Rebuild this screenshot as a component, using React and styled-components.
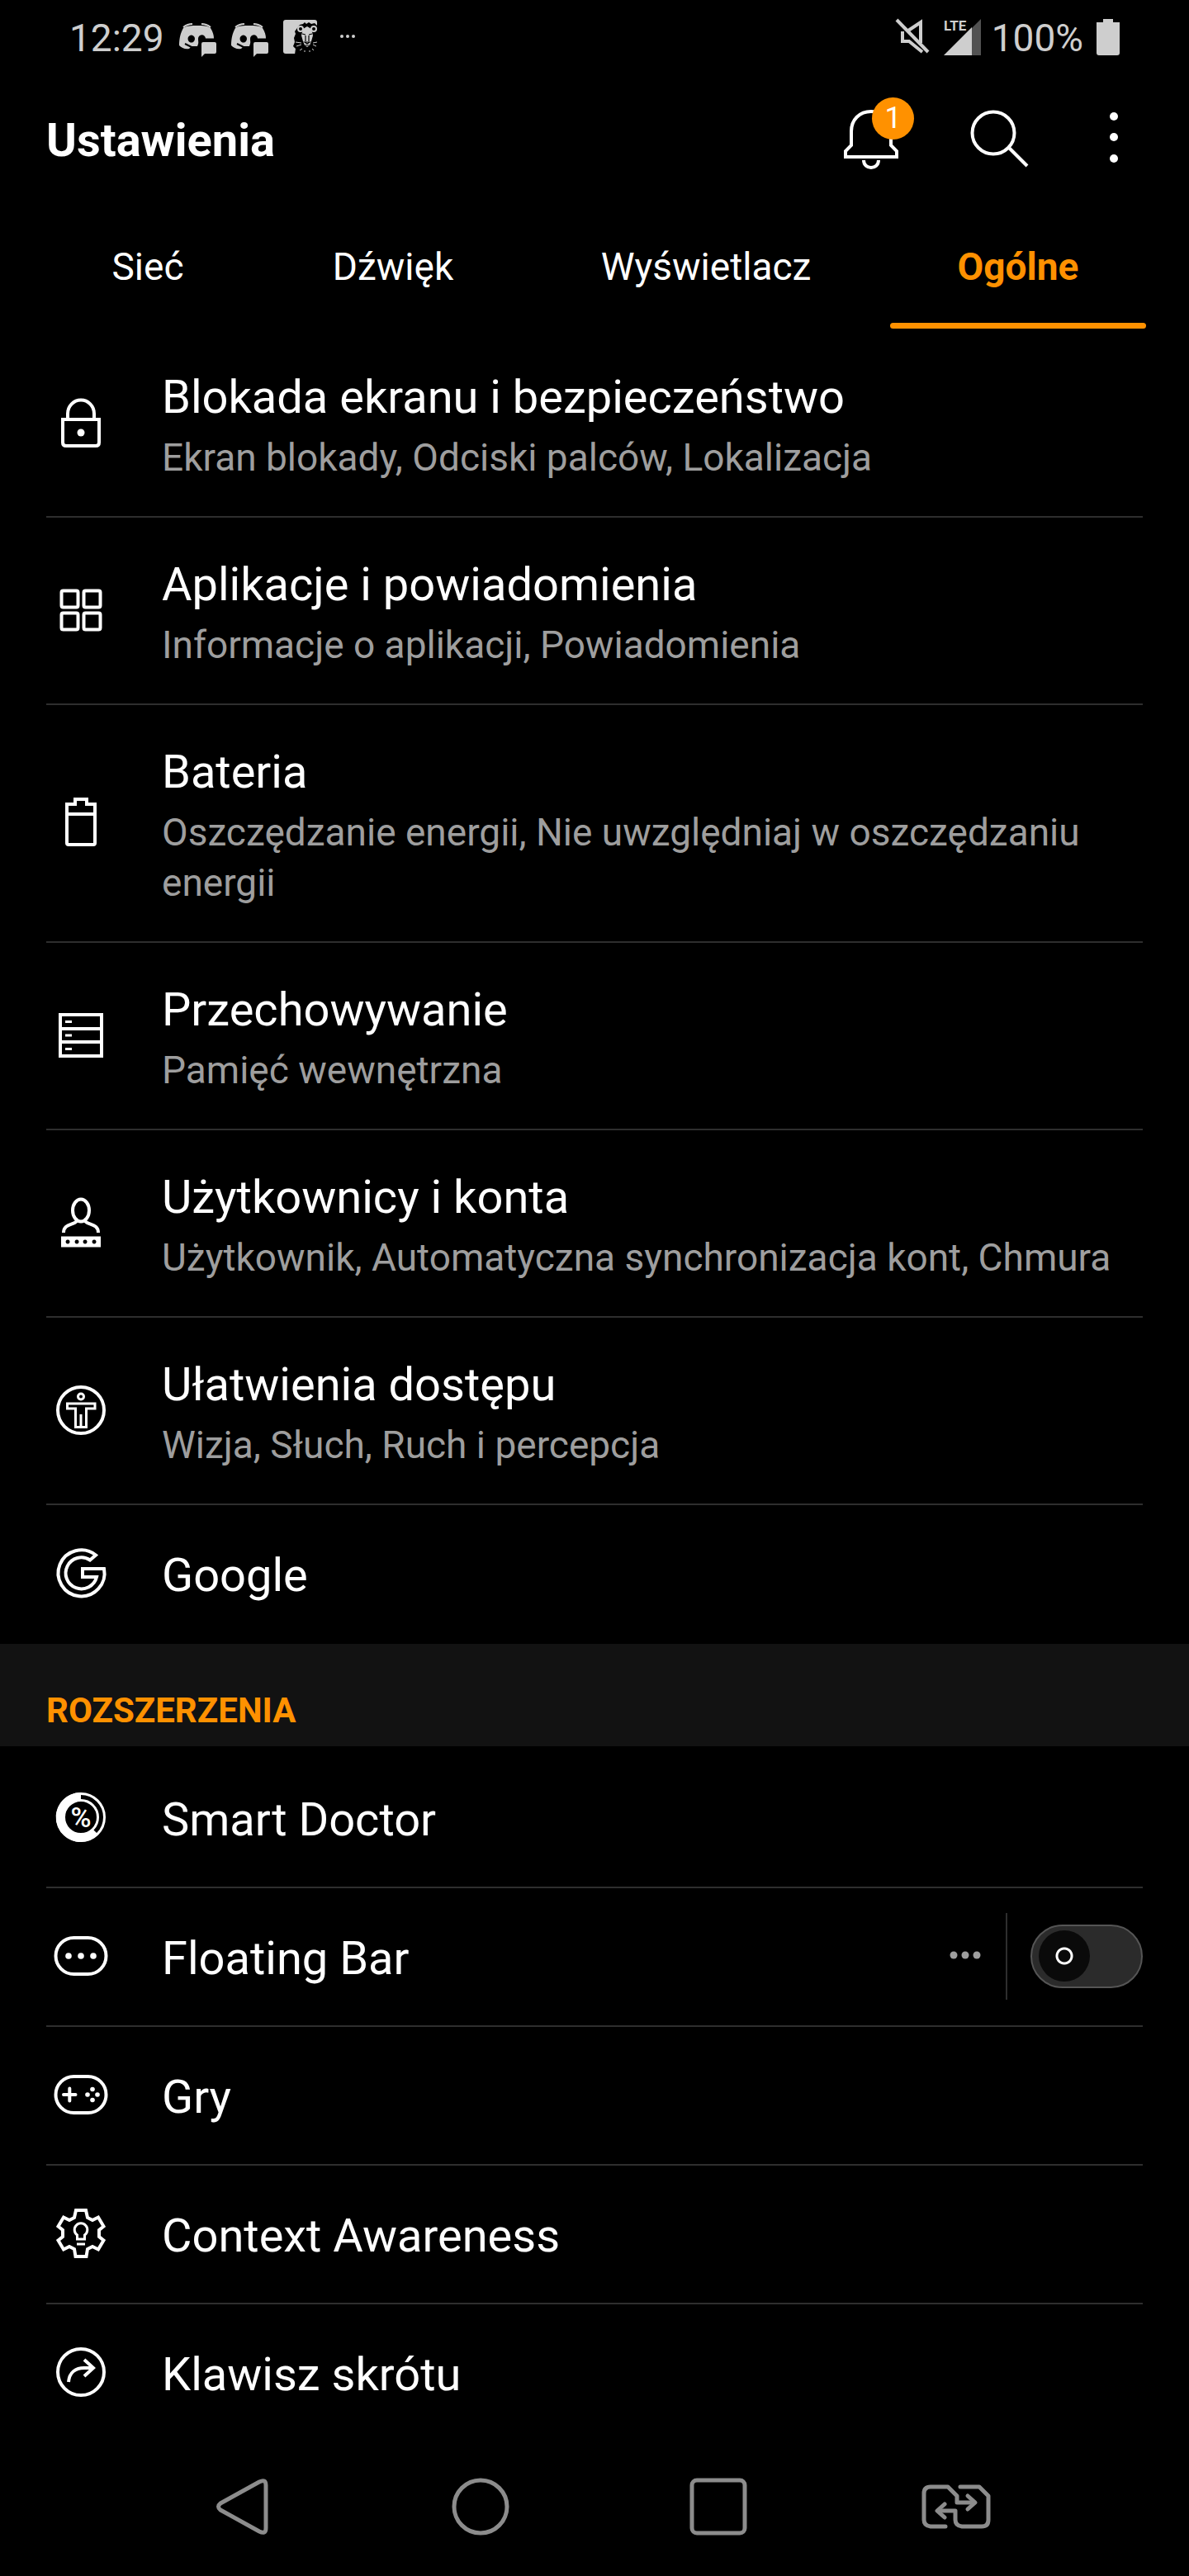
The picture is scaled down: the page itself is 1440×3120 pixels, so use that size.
import React from "react";
import styled, {createGlobalStyle} from "styled-components"

const tabs = [
    {id: 'network', name: 'Sieć'},
    {id: 'sound', name: 'Dźwięk'},
    {id: 'display', name: 'Wyświetlacz'},
    {id: 'general', name: 'Ogólne'},
]

const general = [
    {name: 'Blokada ekranu i bezpieczeństwo', info: 'Ekran blokady, Odciski palców, Lokalizacja', Icon: LockIcon},
    {name: 'Aplikacje i powiadomienia', info: 'Informacje o aplikacji, Powiadomienia', Icon: AppsIcon},
    {name: 'Bateria', info: 'Oszczędzanie energii, Nie uwzględniaj w oszczędzaniu energii', Icon: BatteryIcon},
    {name: 'Przechowywanie', info: 'Pamięć wewnętrzna', Icon: StorageIcon},
    {name: 'Użytkownicy i konta', info: 'Użytkownik, Automatyczna synchronizacja kont, Chmura', Icon: UserIcon},
    {name: 'Ułatwienia dostępu', info: 'Wizja, Słuch, Ruch i percepcja', Icon: AccessibilityIcon},
    {name: 'Google', Icon: GoogleIcon},
]

const extensions = [
    {name: 'Smart Doctor', Icon: DoctorIcon},
    {name: 'Floating Bar', Icon: FloatingBarIcon, toggle: true},
    {name: 'Gry', Icon: GamesIcon},
    {name: 'Context Awareness', Icon: ContextIcon},
    {name: 'Klawisz skrótu', Icon: ShortcutIcon},
]

export default function App() {
    const [active, setActive] = React.useState('general')

    return (
        <>
            <GlobalStyle />
            <Screen>
                <StatusBar />
                <Toolbar>
                    <Heading>Ustawienia</Heading>
                    <Actions>
                        <ActionButton aria-label="Powiadomienia">
                            <BellIcon />
                            <Badge>1</Badge>
                        </ActionButton>
                        <ActionButton aria-label="Szukaj"><SearchIcon /></ActionButton>
                        <ActionButton aria-label="Więcej"><MoreIcon /></ActionButton>
                    </Actions>
                </Toolbar>
                <Tabs>
                    {tabs.map(tab => (
                        <Tab key={tab.id} $active={tab.id === active} onClick={() => setActive(tab.id)}>
                            {tab.name}
                        </Tab>
                    ))}
                </Tabs>
                <main>
                    <List>
                        {general.map(item => <Setting key={item.name} {...item} />)}
                    </List>
                    <SectionTitle>ROZSZERZENIA</SectionTitle>
                    <List $spaced>
                        {extensions.map(item => <Setting key={item.name} {...item} />)}
                    </List>
                </main>
                <NavBar />
            </Screen>
        </>
    )
}

function Setting({name, info, Icon, toggle}) {
    const [checked, setChecked] = React.useState(false)

    if (toggle) {
        return (
            <Item>
                <Row as="div">
                    <Icon />
                    <Texts $single><Name as="label" htmlFor="toggle">{name}</Name></Texts>
                    <Controls>
                        <OptionsButton aria-label="Opcje">
                            <svg width="42" height="42" fill="#9e9e9e">
                                <circle cx="7" cy="20" r="4.5" />
                                <circle cx="21" cy="20" r="4.5" />
                                <circle cx="35" cy="20" r="4.5" />
                            </svg>
                        </OptionsButton>
                        <Separator />
                        <Switch
                            id="toggle"
                            type="checkbox"
                            checked={checked}
                            onChange={({target}) => setChecked(target.checked)}
                        />
                    </Controls>
                </Row>
            </Item>
        )
    }

    return (
        <Item>
            <Row href="#">
                <Icon />
                <Texts $single={!info}>
                    <Name>{name}</Name>
                    {info ? <Info>{info}</Info> : null}
                </Texts>
            </Row>
        </Item>
    )
}

function StatusBar() {
    return (
        <Status>
            <StatusGroup>
                <span>12:29</span>
                <DiscordIcon />
                <DiscordIcon />
                <LionIcon />
                <svg width="46" height="46" fill="currentColor">
                    <circle cx="11" cy="21" r="2" />
                    <circle cx="18" cy="21" r="2" />
                    <circle cx="25" cy="21" r="2" />
                </svg>
            </StatusGroup>
            <StatusGroup $right>
                <svg width="42" height="46" fill="none" stroke="currentColor" strokeWidth="4">
                    <path d="M15 14L30 4V29" />
                    <path d="M8 15V27H16L32 40" />
                    <path d="M1 1L39 40" />
                </svg>
                <svg width="42" height="46" fill="currentColor">
                    <path d="M45 0V44H34V11Z" opacity="0.4" />
                    <path d="M0 44L34 10V44Z" />
                    <text x="0" y="14" fontSize="17" fontWeight="700">LTE</text>
                </svg>
                <span>100%</span>
                <svg width="28" height="46" fill="currentColor">
                    <path d="M8 0H20V4H28V41a3 3 0 0 1-3 3H3a3 3 0 0 1-3-3V4H8Z" />
                </svg>
            </StatusGroup>
        </Status>
    )
}

function NavBar() {
    return (
        <Nav>
            <NavButton aria-label="Wstecz">
                <NavSvg>
                    <path d="M8 31L55 5Q63 1 63 9V61Q63 69 55 65L8 39Q3 35 8 31Z" />
                </NavSvg>
            </NavButton>
            <NavButton aria-label="Ekran główny">
                <NavSvg><circle cx="35" cy="35" r="32" /></NavSvg>
            </NavButton>
            <NavButton aria-label="Ostatnie">
                <NavSvg><rect x="3" y="3" width="64" height="64" rx="6" /></NavSvg>
            </NavButton>
            <NavButton aria-label="Podziel ekran">
                <NavSvg $wide>
                    <path d="M29 59H11Q3 58 3 51V19Q3 11 11 11H32L43 22V30H63" />
                    <path d="M56 22L65 30L56 38" />
                    <path d="M47 11H70L81 22V51Q81 59 73 59H49Q41 58 41 51V40H21" />
                    <path d="M28 32L19 40L28 48" />
                </NavSvg>
            </NavButton>
        </Nav>
    )
}

function DiscordIcon() {
    return (
        <svg width="45" height="46" fill="currentColor">
            <path
                fillRule="evenodd"
                d="M5 11C9 8 15 8 22 8S34 8 38 11C41 16 42 20 42 23.5H32A4.5 4.5 0 0 0 23 24C23 28 24 28 22 33H15L12 36C7 37 3 35 0 32C0 23 2 16 5 11ZM14.7 19.5a4.2 4.5 0 1 0 .1 0Z"
            />
            <path d="M5 10Q10 6 16 6M27 6Q33 6 38 10" fill="none" stroke="currentColor" strokeWidth="2" />
            <path d="M7 30L15 34" stroke="#000" strokeWidth="2" />
            <path d="M29 28H43a2 2 0 0 1 2 2V40a2 2 0 0 1-2 2H31L27 46V30a2 2 0 0 1 2-2Z" />
        </svg>
    )
}

function LionIcon() {
    return (
        <svg width="42" height="46" fill="none">
            <rect y="1" width="41" height="41" rx="3" fill="currentColor" />
            <path d="M17 11L20 7L24 6L26 4L28 6L31 4L34 6L38 5L42 9V43H14L15 36L12 33L14 28L13 23L15 18L14 15Z" fill="#000" />
            <circle cx="21" cy="12" r="3" stroke="currentColor" strokeWidth="2" />
            <circle cx="37" cy="12" r="3" stroke="currentColor" strokeWidth="2" />
            <path d="M24 12L29 9L34 12L36 20L34 27L32 32L29 34L26 32L24 27L22 20Z" fill="currentColor" />
            <path d="M23 18L27 19M35 18L31 19M27 20V27M31 20V27M26 28H32L29 30ZM26 32H32" stroke="#000" strokeWidth="1.2" />
            <path d="M15 28L22 29M16 33L22 31M36 31L40 33M36 29L41 28M20 38L23 36M26 40V38M32 40V38M37 38L35 36" stroke="currentColor" strokeWidth="1" />
        </svg>
    )
}

function BellIcon() {
    return (
        <svg width="102" height="84" fill="none" stroke="currentColor" strokeWidth="4">
            <path d="M18 48V31C18 17 28 7 42 7S66 17 66 31V48L73 55V62H11V55Z" />
            <path d="M33 66C33 78 51 78 51 66" />
        </svg>
    )
}

function SearchIcon() {
    return (
        <svg width="84" height="84" fill="none" stroke="currentColor" strokeWidth="4">
            <circle cx="34" cy="33" r="25.5" />
            <path d="M52 50L75 73" />
        </svg>
    )
}

function MoreIcon() {
    return (
        <svg width="84" height="84" fill="currentColor">
            <circle cx="42" cy="13" r="5" />
            <circle cx="42" cy="38" r="5" />
            <circle cx="42" cy="64" r="5" />
        </svg>
    )
}

function LockIcon() {
    return (
        <IconSvg>
            <path d="M20 38H64V66Q64 70 60 70H24Q20 70 20 66Z" />
            <path d="M26 38V31a16 16.5 0 0 1 32 0V38" />
            <circle cx="42" cy="54" r="4.5" fill="currentColor" stroke="none" />
        </IconSvg>
    )
}

function AppsIcon() {
    return (
        <IconSvg>
            <rect x="18.5" y="18.5" width="20" height="20" rx="2" />
            <rect x="45.5" y="18.5" width="20" height="20" rx="2" />
            <rect x="18.5" y="45.5" width="20" height="20" rx="2" />
            <rect x="45.5" y="45.5" width="20" height="20" rx="2" />
        </IconSvg>
    )
}

function BatteryIcon() {
    return (
        <IconSvg>
            <path d="M25 20H35V14H49V20H59V67Q59 69 57 69H27Q25 69 25 67Z" />
            <path d="M25 32H59" />
        </IconSvg>
    )
}

function StorageIcon() {
    return (
        <IconSvg>
            <path d="M17 17H67V67H17ZM17 34H67M17 50H67" />
            <path d="M23 25.5H31M23 42H31M23 58.5H31" strokeWidth="3" />
        </IconSvg>
    )
}

function UserIcon() {
    return (
        <IconSvg>
            <ellipse cx="42" cy="27" rx="10" ry="13.5" />
            <path d="M21 54C21 43 33 45 37 40M63 54C63 43 51 45 47 40" />
            <path
                d="M18 58.5H66V71.5H18ZM26 62.5a2.5 2.5 0 1 0 .1 0ZM37 62.5a2.5 2.5 0 1 0 .1 0ZM47 62.5a2.5 2.5 0 1 0 .1 0ZM58 62.5a2.5 2.5 0 1 0 .1 0Z"
                fill="currentColor"
                fillRule="evenodd"
                stroke="none"
            />
        </IconSvg>
    )
}

function AccessibilityIcon() {
    return (
        <IconSvg>
            <circle cx="42" cy="42" r="28" />
            <g className="thin">
                <circle cx="42" cy="25.5" r="3.5" />
                <path d="M25.5 34H59V40H48.5V62.5H35.5V40H25.5ZM42 47V62" />
            </g>
        </IconSvg>
    )
}

function GoogleIcon() {
    return (
        <IconSvg>
            <path d="M60 20.5A28 28 0 1 0 70 37H44V47H61A19 19 0 1 1 53 26.5Z" />
        </IconSvg>
    )
}

function DoctorIcon() {
    return (
        <IconSvg>
            <circle cx="42" cy="42" r="20.5" strokeWidth="3" />
            <circle cx="42" cy="42" r="28.5" strokeWidth="3" />
            <path d="M42 17A25 25 0 1 0 59.5 59.5" strokeWidth="10" />
            <text x="42" y="54" textAnchor="middle" fontSize="34" fontWeight="500" fill="currentColor" stroke="none">%</text>
        </IconSvg>
    )
}

function FloatingBarIcon() {
    return (
        <IconSvg>
            <rect x="11.5" y="20" width="61" height="44" rx="22" />
            <g fill="currentColor" stroke="none">
                <circle cx="27" cy="42" r="3.8" />
                <circle cx="42" cy="42" r="3.8" />
                <circle cx="57" cy="42" r="3.8" />
            </g>
        </IconSvg>
    )
}

function GamesIcon() {
    return (
        <IconSvg>
            <rect x="11.5" y="20" width="61" height="44" rx="22" />
            <path d="M21 42H35.5M28.3 34.5V49.5" strokeLinecap="round" />
            <g fill="currentColor" stroke="none">
                <circle cx="56" cy="35.5" r="2.8" />
                <circle cx="56" cy="48.5" r="2.8" />
                <circle cx="50" cy="42" r="2.8" />
                <circle cx="62" cy="42" r="2.8" />
            </g>
        </IconSvg>
    )
}

function ContextIcon() {
    return (
        <IconSvg>
            <path d="M36 14H48L50 23L56 26L63 22.5L69.5 33.5L64 38V46L69.5 50.5L63 61.5L56 58L50 61L48.5 70H35.5L34 61L28 58L21 61.5L14.5 50.5L20 46V38L14.5 33.5L21 22.5L28 26L34 23Z" />
            <g className="thin">
                <path d="M37.5 49V44A7.8 7.8 0 1 1 46.5 44V49Z" />
                <path d="M37 55H47" />
            </g>
        </IconSvg>
    )
}

function ShortcutIcon() {
    return (
        <IconSvg>
            <circle cx="42" cy="42" r="28" />
            <path d="M27 54C28 42 36 37 46 37H57M46 27L57 37L46 47" />
        </IconSvg>
    )
}

const GlobalStyle = createGlobalStyle`
  * {
    box-sizing: border-box;
  }

  body {
    margin: 0;
    background: #000;
    color: #fff;
    font-family: Roboto, sans-serif;
  }

  button {
    padding: 0;
    border: 0;
    background: none;
    color: inherit;
    font: inherit;
    cursor: pointer;
  }

  svg {
    display: block;
    flex: none;
    overflow: visible;
  }
`;

const Screen = styled.div`
  display: flex;
  flex-direction: column;
`;

const Status = styled.div`
  display: flex;
  justify-content: space-between;
  align-items: center;
  height: 92px;
  padding: 0 84px;
  color: #cecece;
  font-size: 46px;
  line-height: 54px;
`;

const StatusGroup = styled.div`
  display: flex;
  align-items: center;
  gap: ${({$right}) => $right ? 16 : 18}px;
`;

const Toolbar = styled.header`
  display: flex;
  justify-content: space-between;
  align-items: center;
  height: 156px;
  padding: 0 49px 0 56px;
`;

const Heading = styled.h1`
  margin: 0;
  font-size: 56px;
  line-height: 66px;
  font-weight: 700;
`;

const Actions = styled.div`
  display: flex;
  gap: 54px;
`;

const ActionButton = styled.button`
  position: relative;
`;

const Badge = styled.span`
  position: absolute;
  top: -10px;
  left: 43px;
  width: 51px;
  height: 51px;
  border-radius: 50%;
  background: #ff9100;
  font-size: 36px;
  line-height: 50px;
  text-align: center;
`;

const Tabs = styled.nav`
  display: grid;
  grid-template-columns: 282fr 312fr 446fr 310fr;
  padding: 0 52px 2px 38px;
`;

const Tab = styled.button`
  position: relative;
  height: 150px;
  font-size: 46px;
  line-height: 54px;

  && {
    color: ${({$active}) => $active ? '#ff9100' : '#fff'};
    font-weight: ${({$active}) => $active ? 700 : 400};
  }

  &::after {
    content: '';
    position: absolute;
    left: 0;
    right: 0;
    bottom: 0;
    height: 7px;
    border-radius: 4px;
    background: ${({$active}) => $active ? '#ff9100' : 'transparent'};
  }
`;

const List = styled.ul`
  margin: 0;
  padding: ${({$spaced}) => $spaced ? 4 : 0}px 56px 0;
  list-style: none;
`;

const Item = styled.li`
  & + & {
    border-top: 2px solid #2e2e2e;
  }
`;

const Row = styled.a`
  display: flex;
  align-items: center;
  color: inherit;
  text-decoration: none;
`;

const IconSvg = styled.svg.attrs({viewBox: '0 1 84 84'})`
  width: 84px;
  height: 84px;
  margin-right: 56px;
  fill: none;
  stroke: currentColor;
  stroke-width: 4px;

  .thin {
    stroke-width: 3px;
  }
`;

const Texts = styled.div`
  flex: 1;
  padding: ${({$single}) => $single ? '52px 0 48px' : '48px 0 40px'};
`;

const Name = styled.div`
  display: block;
  font-size: 56px;
  line-height: 66px;
`;

const Info = styled.div`
  margin-top: 10px;
  color: #9e9e9e;
  font-size: 46px;
  line-height: 61px;
`;

const SectionTitle = styled.h2`
  margin: 2px 0 0;
  padding: 56px 56px 18px;
  background: #121212;
  color: #ff9100;
  font-size: 42px;
  line-height: 50px;
  font-weight: 700;
`;

const Controls = styled.div`
  display: flex;
  align-items: center;
  gap: 28px;
  padding-bottom: 2px;
`;

const OptionsButton = styled.button`
  border-radius: 50%;
`;

const Separator = styled.div`
  width: 2px;
  height: 105px;
  background: #2e2e2e;
`;

const Switch = styled.input`
  appearance: none;
  display: flex;
  align-items: center;
  justify-content: ${({checked}) => checked ? 'flex-end' : 'flex-start'};
  width: 136px;
  height: 77px;
  margin: 0;
  padding: 0 8px;
  border: 2px solid #555;
  border-radius: 39px;
  background: #2b2b2b;
  cursor: pointer;

  &::before {
    content: '';
    width: 62px;
    height: 62px;
    border-radius: 50%;
    background: radial-gradient(circle, #0a0a0a 7px, #fff 8px, #fff 10px, #0a0a0a 11px);
  }
`;

const Nav = styled.nav`
  display: grid;
  grid-template-columns: repeat(4, 1fr);
  padding: 44px 138px 49px 150px;
`;

const NavButton = styled.button`
  display: flex;
  justify-content: center;
`;

const NavSvg = styled.svg`
  width: ${({$wide}) => $wide ? 84 : 70}px;
  height: 70px;
  fill: none;
  stroke: #8c8c8c;
  stroke-width: 5px;
  stroke-linecap: round;
  stroke-linejoin: round;
`;
